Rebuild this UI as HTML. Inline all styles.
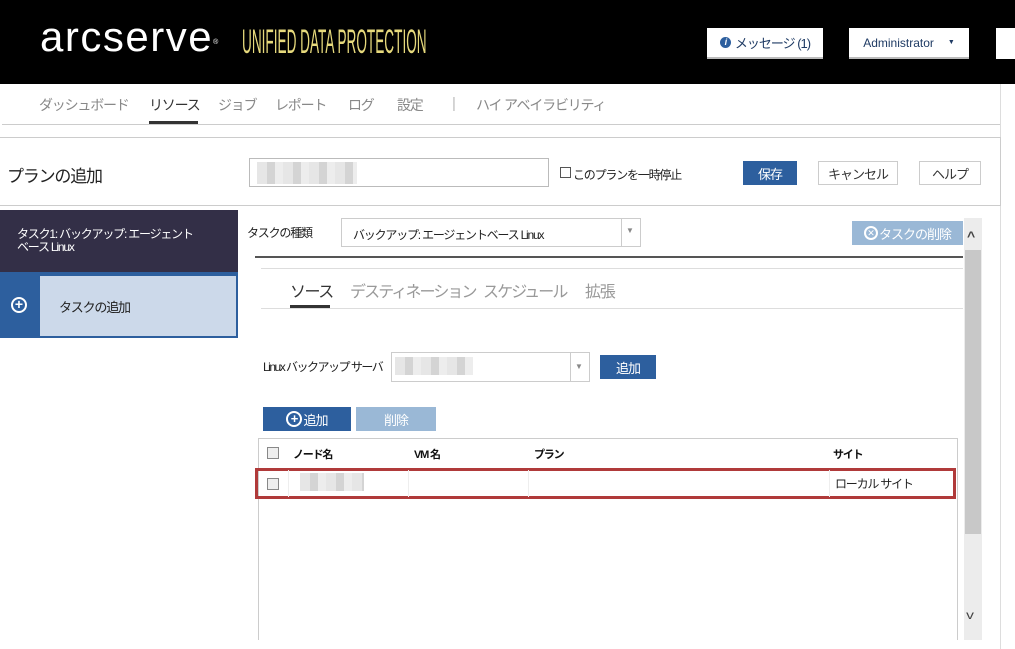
<!DOCTYPE html><html><head><meta charset="utf-8"><style>
*{box-sizing:border-box;margin:0;padding:0}
body{width:1015px;height:649px;overflow:hidden;background:#fff;font-family:"Liberation Sans","Noto Sans CJK JP",sans-serif;position:relative;color:#333}
.a{position:absolute;white-space:nowrap}
.j{letter-spacing:-1.2px}
.btn{position:absolute;color:#fff;font-size:13px;display:flex;align-items:center;justify-content:center;letter-spacing:-1px}
.wb{position:absolute;background:#fff;border:1px solid #ccc;font-size:13px;display:flex;align-items:center;justify-content:center;color:#333;letter-spacing:-1px}
.blur{position:absolute;background:repeating-linear-gradient(90deg,#e6e6e6 0 10px,#d4d4d4 10px 18px,#ededed 18px 26px)}
</style></head><body>
<div class="a" style="left:0;top:0;width:1015px;height:84px;background:#000"></div>
<div class="a" style="left:40px;top:16px;color:#fff;font-size:42px;letter-spacing:1.5px;line-height:42px">arcserve<span style="font-size:7px;vertical-align:top;position:relative;top:6px">®</span></div>
<div class="a" style="left:242px;top:24px;color:#e6d97c;font-size:34px;line-height:36px;transform:scaleX(0.4);transform-origin:left">UNIFIED DATA PROTECTION</div>
<div class="wb" style="left:707px;top:28px;width:116px;height:31px;border:none;border-bottom:2px solid #bbb;color:#1f3b64;font-size:13px"><span style="display:inline-block;width:11px;height:11px;border-radius:50%;background:#2d5f9e;color:#fff;font-size:9px;text-align:center;line-height:11px;margin-right:4px;font-style:italic;font-weight:bold">i</span>メッセージ (1)</div>
<div class="wb" style="left:849px;top:28px;width:120px;height:31px;border:none;border-bottom:2px solid #bbb;color:#1f3b64;font-size:12px;letter-spacing:0">Administrator <span style="font-size:7px;margin-left:14px">▼</span></div>
<div class="a" style="left:996px;top:28px;width:19px;height:31px;background:#fff"></div>
<div class="a" style="left:1000px;top:84px;width:1px;height:565px;background:#ddd"></div>
<div class="a j" style="left:39px;top:95px;font-size:14px;color:#888">ダッシュボード</div>
<div class="a j" style="left:149px;top:95px;font-size:14px;color:#333">リソース</div>
<div class="a" style="left:149px;top:121px;width:49px;height:3px;background:#333"></div>
<div class="a j" style="left:218px;top:95px;font-size:14px;color:#888">ジョブ</div>
<div class="a j" style="left:275px;top:95px;font-size:14px;color:#888">レポート</div>
<div class="a j" style="left:348px;top:95px;font-size:14px;color:#888">ログ</div>
<div class="a j" style="left:397px;top:95px;font-size:14px;color:#888">設定</div>
<div class="a" style="left:452px;top:95px;font-size:15px;color:#bbb">|</div>
<div class="a j" style="left:476px;top:95px;font-size:14px;color:#888">ハイ アベイラビリティ</div>
<div class="a" style="left:2px;top:124px;width:998px;height:1px;background:#ccc"></div>
<div class="a" style="left:0;top:137px;width:1001px;height:69px;border:1px solid #ccc;border-left:none"></div>
<div class="a j" style="left:7px;top:162px;font-size:17px;color:#222">プランの追加</div>
<div class="a" style="left:249px;top:158px;width:300px;height:29px;border:1px solid #bbb"></div>
<div class="blur" style="left:257px;top:162px;width:100px;height:22px"></div>
<div class="a" style="left:560px;top:167px;width:11px;height:11px;border:1px solid #555"></div>
<div class="a j" style="left:573px;top:166px;font-size:12px;color:#222">このプランを一時停止</div>
<div class="btn" style="left:743px;top:161px;width:54px;height:24px;background:#2d5f9e">保存</div>
<div class="wb" style="left:818px;top:161px;width:80px;height:24px">キャンセル</div>
<div class="wb" style="left:919px;top:161px;width:62px;height:24px">ヘルプ</div>
<div class="a j" style="left:0;top:210px;width:238px;height:62px;background:#332f47;color:#fff;font-size:12px;padding:18px 0 0 17px;line-height:13px">タスク1: バックアップ: エージェント<br>ベース Linux</div>
<div class="a" style="left:0;top:272px;width:238px;height:66px;background:#2d5f9e"></div>
<div class="a j" style="left:40px;top:276px;width:196px;height:60px;background:#ccd9ea;font-size:13px;color:#222;padding:21px 0 0 19px">タスクの追加</div>
<div class="a" style="left:11px;top:297px;width:16px;height:16px;border:2px solid #fff;border-radius:50%;color:#fff;font-size:14px;line-height:11px;text-align:center;font-weight:bold">+</div>
<div class="a j" style="left:247px;top:224px;font-size:12px;color:#222">タスクの種類</div>
<div class="a j" style="left:341px;top:218px;width:300px;height:29px;border:1px solid #ccc;font-size:12px;padding:7px 0 0 11px;color:#222">バックアップ: エージェントベース Linux</div>
<div class="a" style="left:621px;top:218px;width:1px;height:29px;background:#ccc"></div>
<div class="a" style="left:626px;top:226px;font-size:8px;color:#888">▼</div>
<div class="btn" style="left:852px;top:221px;width:111px;height:24px;background:#9ab8d6;font-size:13px"><span style="display:inline-block;width:14px;height:14px;border:2px solid #fff;border-radius:50%;font-size:9px;line-height:10px;text-align:center;margin-right:1px;letter-spacing:0">✕</span>タスクの削除</div>
<div class="a" style="left:255px;top:256px;width:708px;height:2px;background:#555"></div>
<div class="a" style="left:261px;top:268px;width:702px;height:1px;background:#ddd"></div>
<div class="a j" style="left:290px;top:278px;font-size:16px;color:#333;letter-spacing:-1.5px">ソース</div>
<div class="a" style="left:290px;top:305px;width:40px;height:3px;background:#333"></div>
<div class="a j" style="left:350px;top:278px;font-size:16px;color:#999;letter-spacing:-1.9px">デスティネーション</div>
<div class="a j" style="left:483px;top:278px;font-size:16px;color:#999;letter-spacing:-1.9px">スケジュール</div>
<div class="a j" style="left:585px;top:278px;font-size:16px;color:#999">拡張</div>
<div class="a" style="left:261px;top:308px;width:702px;height:1px;background:#ddd"></div>
<div class="a j" style="left:263px;top:358px;font-size:12px;color:#222;letter-spacing:-1.5px">Linux バックアップ サーバ</div>
<div class="a" style="left:391px;top:352px;width:199px;height:30px;border:1px solid #ccc;background:#fff"></div>
<div class="blur" style="left:395px;top:357px;width:78px;height:18px"></div>
<div class="a" style="left:570px;top:352px;width:1px;height:30px;background:#ccc"></div>
<div class="a" style="left:575px;top:362px;font-size:8px;color:#888">▼</div>
<div class="btn" style="left:600px;top:355px;width:56px;height:24px;background:#2d5f9e">追加</div>
<div class="btn" style="left:263px;top:407px;width:88px;height:24px;background:#2d5f9e"><span style="display:inline-block;width:16px;height:16px;border:2px solid #fff;border-radius:50%;font-size:13px;line-height:11px;text-align:center;font-weight:bold;margin-right:1px;letter-spacing:0">+</span>追加</div>
<div class="btn" style="left:356px;top:407px;width:80px;height:24px;background:#9ab8d6">削除</div>
<div class="a" style="left:258px;top:438px;width:700px;height:202px;border:1px solid #ccc;border-bottom:none"></div>
<div class="a" style="left:267px;top:447px;width:12px;height:12px;border:1px solid #888;background:#eee"></div>
<div class="a j" style="left:293px;top:446px;font-size:11px;font-weight:bold;color:#111">ノード名</div>
<div class="a j" style="left:414px;top:446px;font-size:11px;font-weight:bold;color:#111">VM 名</div>
<div class="a j" style="left:534px;top:446px;font-size:11px;font-weight:bold;color:#111">プラン</div>
<div class="a j" style="left:833px;top:446px;font-size:11px;font-weight:bold;color:#111">サイト</div>
<div class="a" style="left:255px;top:468px;width:701px;height:31px;border:3px solid #b03a3a"></div>
<div class="a" style="left:288px;top:470px;width:1px;height:27px;background:#eee"></div>
<div class="a" style="left:408px;top:470px;width:1px;height:27px;background:#eee"></div>
<div class="a" style="left:528px;top:470px;width:1px;height:27px;background:#eee"></div>
<div class="a" style="left:829px;top:470px;width:1px;height:27px;background:#eee"></div>
<div class="a" style="left:267px;top:478px;width:12px;height:12px;border:1px solid #888;background:#eee"></div>
<div class="blur" style="left:300px;top:473px;width:64px;height:18px"></div>
<div class="a j" style="left:835px;top:475px;font-size:12px;color:#222">ローカル サイト</div>
<div class="a" style="left:964px;top:218px;width:18px;height:422px;background:#ececec"></div>
<div class="a" style="left:965px;top:250px;width:16px;height:284px;background:#c8c8c8"></div>
<div class="a" style="left:967px;top:228px;font-size:14px;color:#444;font-weight:bold">^</div>
<div class="a" style="left:967px;top:608px;font-size:12px;color:#444;transform:scaleX(1.3)">v</div>
</body></html>
